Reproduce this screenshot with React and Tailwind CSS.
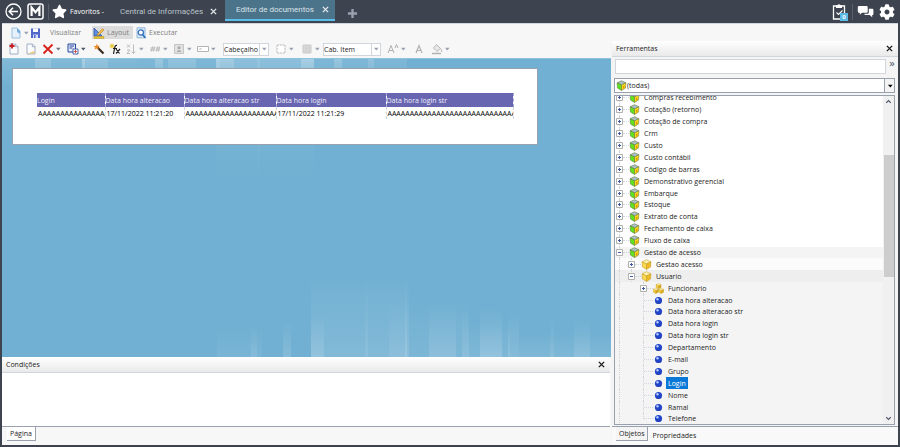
import { useState } from "react";
import { FaStar, FaCog } from "react-icons/fa";

const TREE = [
  { label: "Compras recebimento", level: 0, icon: "cube", box: "+" },
  { label: "Cotação (retorno)", level: 0, icon: "cube", box: "+" },
  { label: "Cotação de compra", level: 0, icon: "cube", box: "+" },
  { label: "Crm", level: 0, icon: "cube", box: "+" },
  { label: "Custo", level: 0, icon: "cube", box: "+" },
  { label: "Custo contábil", level: 0, icon: "cube", box: "+" },
  { label: "Código de barras", level: 0, icon: "cube", box: "+" },
  { label: "Demonstrativo gerencial", level: 0, icon: "cube", box: "+" },
  { label: "Embarque", level: 0, icon: "cube", box: "+" },
  { label: "Estoque", level: 0, icon: "cube", box: "+" },
  { label: "Extrato de conta", level: 0, icon: "cube", box: "+" },
  { label: "Fechamento de caixa", level: 0, icon: "cube", box: "+" },
  { label: "Fluxo de caixa", level: 0, icon: "cube", box: "+" },
  { label: "Gestao de acesso", level: 0, icon: "cube", box: "-", bg: "bg-[#f4f4f4]" },
  { label: "Gestao acesso", level: 1, icon: "yellow", box: "+", bg: "bg-[#fbfbfb]" },
  { label: "Usuario", level: 1, icon: "yellow", box: "-", bg: "bg-[#eeeeee]" },
  { label: "Funcionario", level: 2, icon: "cubes", box: "+", bg: "bg-[#f4f4f4]" },
  { label: "Data hora alteracao", level: 2, icon: "ball", bg: "bg-[#f4f4f4]" },
  { label: "Data hora alteracao str", level: 2, icon: "ball", bg: "bg-[#f4f4f4]" },
  { label: "Data hora login", level: 2, icon: "ball", bg: "bg-[#f4f4f4]" },
  { label: "Data hora login str", level: 2, icon: "ball", bg: "bg-[#f4f4f4]" },
  { label: "Departamento", level: 2, icon: "ball", bg: "bg-[#f4f4f4]" },
  { label: "E-mail", level: 2, icon: "ball", bg: "bg-[#f4f4f4]" },
  { label: "Grupo", level: 2, icon: "ball", bg: "bg-[#f4f4f4]" },
  { label: "Login", level: 2, icon: "ball", bg: "bg-[#f4f4f4]" },
  { label: "Nome", level: 2, icon: "ball", bg: "bg-[#f4f4f4]" },
  { label: "Ramal", level: 2, icon: "ball", bg: "bg-[#f4f4f4]" },
  { label: "Telefone", level: 2, icon: "ball", bg: "bg-[#f4f4f4]" },
];

const COLUMNS = [
  { title: "Login", value: "AAAAAAAAAAAAAAAA", width: "w-[68px]" },
  { title: "Data hora alteracao", value: "17/11/2022 11:21:20", width: "w-[79px]" },
  { title: "Data hora alteracao str", value: "AAAAAAAAAAAAAAAAAAAAA", width: "w-[92px]" },
  { title: "Data hora login", value: "17/11/2022 11:21:29", width: "w-[110px]" },
  { title: "Data hora login str", value: "AAAAAAAAAAAAAAAAAAAAAAAAAAAAA", width: "w-[127px]" },
];

// x, width, height, opacity of the light bars behind the page
const TOP_BARS = [
  [0, 135, 30, 0.12], [33, 16, 40, 0.2], [80, 26, 40, 0.14], [80, 3, 40, 0.2], [135, 270, 26, 0.1],
  [153, 8, 26, 0.22], [166, 28, 26, 0.16], [214, 18, 26, 0.2], [214, 98, 124, 0.1], [214, 4, 100, 0.1],
  [255, 3, 124, 0.1], [299, 13, 26, 0.25], [332, 8, 26, 0.2], [366, 6, 26, 0.15],
];
const BOTTOM_BARS = [
  [215, 45, 30, 0.06], [249, 6, 32, 0.1], [281, 8, 36, 0.14], [309, 96, 85, 0.12], [309, 13, 42, 0.14],
  [363, 3, 82, 0.08], [403, 4, 82, 0.12], [387, 79, 58, 0.08], [427, 27, 54, 0.12], [460, 7, 50, 0.12],
  [466, 42, 34, 0.1], [478, 22, 50, 0.16], [506, 11, 44, 0.14], [517, 92, 24, 0.1], [548, 4, 42, 0.1],
  [572, 16, 40, 0.12],
];

function Svg({ size = "size-3", children, box = "0 0 12 12" }) {
  return (
    <svg viewBox={box} className={`${size} shrink-0`} fill="none" aria-hidden="true">
      {children}
    </svg>
  );
}

function Caret({ color = "text-gray-400" }) {
  return (
    <svg viewBox="0 0 8 4" className={`h-1 w-2 shrink-0 ${color}`} aria-hidden="true">
      <path d="M2 0.8h4.6L4.3 3.4z" fill="currentColor" />
    </svg>
  );
}

function Cross({ size = "size-[7px]" }) {
  return (
    <Svg size={size} box="0 0 8 8">
      <path d="M1 1l6 6M7 1L1 7" stroke="currentColor" strokeWidth="1.6" />
    </Svg>
  );
}

function Tool({ label, split, children, caret }) {
  return (
    <button type="button" aria-label={label} className="flex items-center">
      {children}
      {split && <Caret color={caret} />}
    </button>
  );
}

function ToolSelect({ label, value, width }) {
  return (
    <div className={`relative flex h-[13px] border border-gray-300 bg-white ${width}`}>
      <select aria-label={label} className="w-full appearance-none overflow-hidden bg-transparent pr-[9px] leading-[11px]">
        <option>{value}</option>
      </select>
      <span className="pointer-events-none absolute inset-y-0 right-0 flex items-center border-l border-gray-300 bg-white">
        <Caret />
      </span>
    </div>
  );
}

function PageIcon() {
  return (
    <>
      <path d="M2 1h5.5L10 3.5V11H2z" fill="#fbfcff" stroke="#8d9db8" strokeWidth=".8" />
      <path d="M7.3 1v2.8H10" fill="#dde6f3" stroke="#8d9db8" strokeWidth=".7" />
    </>
  );
}

function NodeIcon({ kind }) {
  if (kind === "ball") {
    return (
      <Svg size="size-[11px]">
        <circle cx="6" cy="6" r="3.9" fill="#2145c9" />
        <path d="M2.8 8a3.9 3.9 0 0 0 6.6-.3A5 5 0 0 1 2.8 8z" fill="#0b1c74" />
        <circle cx="4.9" cy="4.7" r="1.3" fill="#b3cbff" />
      </Svg>
    );
  }
  if (kind === "cubes") {
    return (
      <Svg size="size-[11px]">
        {[[3.4, 0.4], [0.4, 5.6], [6.2, 5.6]].map(([x, y]) => (
          <g key={`${x}-${y}`} transform={`translate(${x} ${y})`} stroke="#c49a18" strokeWidth=".4">
            <path d="M0 1.4L2.7 0l2.7 1.4-2.7 1.4z" fill="#fff0a0" />
            <path d="M0 1.4l2.7 1.4v3L0 4.4z" fill="#f5cf3c" />
            <path d="M5.4 1.4L2.7 2.8v3l2.7-1.4z" fill="#d9a71d" />
          </g>
        ))}
      </Svg>
    );
  }
  const cube = kind === "cube";
  return (
    <Svg size="size-[11px]">
      <g stroke={cube ? "#5f7440" : "#c49a24"} strokeWidth=".6" strokeLinejoin="round">
        <path d="M1.2 3L6 .8 10.800 3 6 5.400z" fill={cube ? "#a9bfc3" : "#fff2ac"} />
        <path d="M1.200 3L6 5.400v6L1.600 8.800z" fill={cube ? "#5fe31c" : "#fbd94e"} />
        <path d="M10.800 3L6 5.400v6l4.400-2.600z" fill={cube ? "#ffdc18" : "#eebb27"} />
      </g>
      {cube && <path d="M7.600 6.700l1.600-.9v2.800l-1.600.9z" fill="#d99b00" />}
    </Svg>
  );
}

function Expander({ sign }) {
  return (
    <Svg size="size-[7px]" box="0 0 7 7">
      <path d="M.5.5h6v6h-6z" fill="#fff" stroke="#b0b0b0" />
      <path d={sign === "+" ? "M2 3.5h3M3.5 2v3" : "M2 3.5h3"} stroke="#3d58a8" />
    </Svg>
  );
}

function TreeRow({ node, last, selected, onSelect }) {
  return (
    <li className={`flex min-h-0 flex-1 items-center ${node.bg || ""}`}>
      {node.level > 0 && <span className="ml-1 h-full w-3 shrink-0 border-l border-dotted border-gray-300" />}
      {node.level > 1 && <span className="w-3 shrink-0" />}
      <span className={`relative flex h-full w-[13px] shrink-0 items-center ${node.level > 0 ? "-ml-[3px]" : "ml-px"}`}>
        <span className={`absolute top-0 left-[3px] border-l border-dotted border-gray-300 ${last ? "h-1/2" : "h-full"}`} />
        {node.box ? (
          <span className="relative">
            <Expander sign={node.box} />
          </span>
        ) : (
          <span className="w-1" />
        )}
        <span className="h-px flex-1 border-t border-dotted border-gray-300" />
      </span>
      <NodeIcon kind={node.icon} />
      <button
        type="button"
        onClick={onSelect}
        className={`ml-[2px] h-full px-[2px] leading-[11px] ${selected ? "bg-[#0a78d7] text-white" : ""}`}
      >
        {node.label}
      </button>
    </li>
  );
}

function PanelHeader({ title }) {
  return (
    <div className="flex h-4 shrink-0 items-center justify-between border-b border-gray-300 bg-linear-to-b from-white to-[#e9e9e9] pr-[5px] pl-1">
      <h2>{title}</h2>
      <button type="button" aria-label={`Fechar ${title}`}>
        <Cross />
      </button>
    </div>
  );
}

function Header() {
  return (
    <header className="flex h-[23px] shrink-0 items-center px-[5px] text-white">
      <button type="button" aria-label="Voltar">
        <Svg size="size-[17px]" box="0 0 17 17">
          <circle cx="8.5" cy="8.5" r="7.5" stroke="currentColor" strokeWidth="1.3" />
          <path d="M13 8.5H4.5M8 4.8L4.3 8.5 8 12.2" stroke="currentColor" strokeWidth="1.6" />
        </Svg>
      </button>
      <button type="button" aria-label="Início" className="ml-[5px]">
        <Svg size="size-[17px]" box="0 0 17 17">
          <rect x="1" y="1" width="15" height="15" rx="2" stroke="currentColor" strokeWidth="1.5" />
          <path d="M4.6 13V4.6l3.9 4.6 3.9-4.6V13" stroke="currentColor" strokeWidth="2.2" />
        </Svg>
      </button>
      <span className="ml-1 h-4 w-px bg-[#59606b]" />
      <button type="button" className="ml-[3px] flex items-center gap-[3px]">
        <FaStar className="size-[15px]" />
        Favoritos -
      </button>
      <nav className="ml-4 flex items-center self-stretch font-[Roboto,sans-serif] text-[8px]">
        <a href="#central" className="w-[90px] text-[#bcc2ca]">Central de Informações</a>
        <button type="button" aria-label="Fechar Central de Informações" className="text-gray-200">
          <Cross />
        </button>
        <span className="ml-2 flex h-[21px] items-center self-start border-b-2 border-[#5bbde9] bg-[#4b7389] pl-[11px]">
          <a href="#editor" className="w-[86px] text-[#dbe5ea]">Editor de documentos</a>
          <button type="button" aria-label="Fechar Editor de documentos" className="mr-[6px] text-gray-200">
            <Cross />
          </button>
        </span>
        <button type="button" aria-label="Nova aba" className="ml-3 pt-1 text-gray-400">
          <Svg size="size-[11px]">
            <path d="M6 1v10M1 6h10" stroke="currentColor" strokeWidth="2.6" />
          </Svg>
        </button>
      </nav>
      <div className="ml-auto flex items-center">
        <button type="button" aria-label="Tarefas" className="relative mr-1">
          <Svg size="size-[17px]" box="0 0 17 17">
            <path d="M2.5 3h11v13h-11z" stroke="currentColor" strokeWidth="1.3" />
            <path d="M5 5V2.200h1.600a1.500 1.500 0 0 1 2.800 0H11V5z" fill="currentColor" />
            <path d="M5.500 9.500l2 2 4-4" stroke="currentColor" strokeWidth="1.1" />
          </Svg>
          <span className="absolute right-0 -bottom-px flex size-2 items-center justify-center bg-[#5bb9e6] text-[6px] leading-none font-bold">0</span>
        </button>
        <span className="mr-1 h-4 w-px bg-[#59606b]" />
        <button type="button" aria-label="Mensagens" className="mr-[5px]">
          <Svg size="size-[17px]" box="0 0 17 17">
            <path d="M2 3h7.5q1.200 0 1.200 1.200v4.300q0 1.200-1.200 1.200H5l-2.200 2V9.700H2Q.8 9.700.8 8.500V4.200Q.8 3 2 3z" fill="currentColor" />
            <path d="M11.800 5.700h3.400q1.200 0 1.200 1.200v4q0 1.200-1.200 1.200v2.200l-2.500-2.200H8.500q-1.200 0-1.200-1.300h3.200q1.300 0 1.300-1.300z" fill="currentColor" />
          </Svg>
        </button>
        <button type="button" aria-label="Configurações">
          <FaCog className="size-4" />
        </button>
      </div>
    </header>
  );
}

function MainToolbar() {
  return (
    <div role="toolbar" aria-label="Principal" className="flex h-[18px] shrink-0 items-center border-t border-gray-300 pl-2 text-[#808080]">
      <Tool label="Novo" split>
        <Svg>
          <path d="M2 1h5l3 3v7H2z" fill="#e6f1fb" stroke="#86b2d8" strokeWidth=".8" />
          <path d="M7 1l3 3v3L7 5z" fill="#73aee0" />
        </Svg>
      </Tool>
      <button type="button" aria-label="Salvar">
        <Svg>
          <path d="M1 1.500h9V11H1z" fill="#5067c9" />
          <path d="M3 1.500h5V5H3z" fill="#fff" />
          <path d="M3 7.500h5V11H3z" fill="#d5dcfa" />
          <path d="M4 8h1.500v3H4z" fill="#5067c9" />
        </Svg>
      </button>
      <div className="ml-2 flex items-center">
        <button type="button" className="w-[42px] text-left">Visualizar</button>
        <button type="button" aria-pressed="true" className="flex h-[13px] w-[41px] items-center gap-[2px] bg-[#dcdcdc] px-px">
          <Svg>
            <path d="M1 1v8h8z" fill="#5c8de0" stroke="#2c55a8" strokeWidth=".8" />
            <path d="M4.500 7l5-5.500L11 3 6 8l-2 .5z" fill="#ffc04a" stroke="#a56c12" strokeWidth=".5" />
            <path d="M1 9.500h10v2H1z" fill="#e7c52e" stroke="#a88616" strokeWidth=".4" />
          </Svg>
          Layout
        </button>
        <button type="button" className="ml-[2px] flex items-center gap-[2px]">
          <Svg>
            <path d="M2 .8h8v10H2z" fill="#dcebfa" stroke="#7aa6d3" strokeWidth=".8" />
            <circle cx="5.8" cy="5.5" r="2.6" fill="#fff" stroke="#2d6eb9" strokeWidth="1.2" />
            <path d="M7.500 7.500L10.500 11" stroke="#2d6eb9" strokeWidth="1.5" />
          </Svg>
          Executar
        </button>
      </div>
    </div>
  );
}

function FormatToolbar() {
  return (
    <div role="toolbar" aria-label="Formatação" className="flex h-[17px] shrink-0 items-center gap-[6px] pb-px pl-[6px]">
      <div className="flex items-center gap-[5px]">
        <Tool label="Inserir página">
          <Svg><PageIcon /><path d="M4 .5v5M1.500 3h5" stroke="#c81e1e" strokeWidth="1.8" /></Svg>
        </Tool>
        <Tool label="Página">
          <Svg><PageIcon /><path d="M2.500 10.500h7V8z" fill="#eac77b" /></Svg>
        </Tool>
        <Tool label="Excluir" split caret="text-gray-500">
          <Svg><path d="M1.500 2l9 8.500M10.500 1.500l-9 9" stroke="#d8201b" strokeWidth="1.8" /></Svg>
        </Tool>
        <Tool label="Inserir objeto" split caret="text-gray-600">
          <Svg>
            <path d="M1 1h7.500v8H1z" fill="#e7edfb" stroke="#23479b" />
            <path d="M2.500 3h4.500M2.500 5h3" stroke="#23479b" />
            <path d="M6 6h5v5H6z" fill="#fff" stroke="#23479b" strokeWidth=".8" />
            <path d="M8.500 6.800v3.400M6.800 8.500h3.400" stroke="#c33" strokeWidth=".8" />
          </Svg>
        </Tool>
      </div>
      <div className="flex items-center gap-1">
        <Tool label="Assistente">
          <Svg>
            <path d="M4.500 4.500l6 6" stroke="#3b2a20" strokeWidth="2.2" />
            <path d="M3.800 .5l.8 2.300 2.400.2-1.900 1.400.7 2.400-2-1.400-2.300 1.200.8-2.200L.5 2.900h2.400z" fill="#f08a24" />
          </Svg>
        </Tool>
        <Tool label="Função">
          <Svg>
            <path d="M3 .5v5M.5 3h5M1.200 1.200l3.600 3.600M4.800 1.200L1.200 4.800" stroke="#e5c21d" strokeWidth=".9" />
            <path d="M8 2.500q-1.800-.5-2.200 1.800L4.500 11M4 5.500h4M7 6l3.500 4.500M11 6l-4 4.500" stroke="#222" strokeWidth="1.2" />
          </Svg>
        </Tool>
        <Tool label="Ordenar" split>
          <Svg><path d="M2 1.500l3 3M5 1.500l-3 3M2 7h3L2 10.500h3M8.500 1.500v9M6.800 8.500l1.700 2 1.700-2" stroke="#b4b4b4" strokeWidth=".9" /></Svg>
        </Tool>
        <Tool label="Formato numérico" split>
          <Svg><path d="M3.500 3.500l-1 5M5.500 3.500l-1 5M1.500 5h4.500M1 7h4.500M8.500 3.500l-1 5M10.500 3.500l-1 5M6.800 5H11M6.500 7h4" stroke="#b4b4b4" strokeWidth=".9" /></Svg>
        </Tool>
        <Tool label="Imagem" split>
          <Svg><path d="M1.500 1.500h9v9h-9z" fill="#e2e2e2" stroke="#c4c4c4" /><circle cx="6" cy="4.8" r="1.5" fill="#aaa" /><path d="M3.500 9q2.500-4 5 0z" fill="#aaa" /></Svg>
        </Tool>
        <Tool label="Rótulo" split>
          <Svg><path d="M.5 3.500h11v5H.5z" fill="#fff" stroke="#b4b4b4" /><path d="M2.500 7l1-2 1 2" stroke="#b4b4b4" strokeWidth=".7" /></Svg>
        </Tool>
      </div>
      <ToolSelect label="Seção" value="Cabeçalho" width="w-[46px]" />
      <Tool label="Bordas" split>
        <Svg><path d="M2 2h8v8H2z" fill="#fff" stroke="#b8b8b8" strokeDasharray="2 .7" /></Svg>
      </Tool>
      <Tool label="Preenchimento" split>
        <Svg><path d="M2 2h8v8H2z" fill="#dcdcdc" stroke="#cacaca" /><path d="M2 5h8M5 2v8M2 8h8M8 2v8" stroke="#cacaca" strokeWidth=".6" /></Svg>
      </Tool>
      <div className="-ml-1 flex items-center gap-[6px]">
        <ToolSelect label="Estilo" value="Cab. Item" width="w-[58px]" />
        <Tool label="Tamanho da fonte" split>
          <Svg><path d="M1 10l3-7.500L7 10M2 7.500h4M8 5l1.500-3.500L11 5" stroke="#b0b0b0" /></Svg>
        </Tool>
        <Tool label="Cor da fonte">
          <Svg><path d="M3 10l3-7.500L9 10M4 7.500h4" stroke="#b0b0b0" strokeWidth="1.2" /></Svg>
        </Tool>
        <Tool label="Cor de fundo" split>
          <Svg><path d="M5.500 1.500l4 4-3.500 3-3.500-3.500zM9.500 5.500q2 1.500 1 3.500" fill="#e8e8e8" stroke="#b0b0b0" strokeWidth=".9" /><path d="M1 10.500h9" stroke="#b0b0b0" strokeWidth="1.4" /></Svg>
        </Tool>
      </div>
    </div>
  );
}

function Canvas() {
  return (
    <div className="relative min-h-0 flex-1 overflow-hidden border-t border-[#8cc3de] bg-[#71b0d2]">
      <svg viewBox="0 0 609 299" preserveAspectRatio="none" className="absolute inset-0 size-full" aria-hidden="true">
        <defs>
          <linearGradient id="down" x1="0" y1="0" x2="0" y2="1">
            <stop offset="0" stopColor="#fff" />
            <stop offset="1" stopColor="#fff" stopOpacity="0" />
          </linearGradient>
          <linearGradient id="up" x1="0" y1="1" x2="0" y2="0">
            <stop offset="0" stopColor="#fff" />
            <stop offset="1" stopColor="#fff" stopOpacity="0" />
          </linearGradient>
        </defs>
        {TOP_BARS.map(([x, w, h, o]) => (
          <rect key={`${x}-${w}`} x={x} y="0" width={w} height={h} fill="url(#down)" opacity={o} />
        ))}
        {BOTTOM_BARS.map(([x, w, h, o]) => (
          <rect key={`${x}-${w}`} x={x} y={299 - h} width={w} height={h} fill="url(#up)" opacity={o} />
        ))}
      </svg>
      <div className="relative mt-[9px] ml-[10px] w-[526px] border border-gray-400 bg-white pt-6 pb-[25px] pl-6">
        <table className="w-[476px] table-fixed border-collapse text-left">
          <thead>
            <tr className="h-[14px] bg-[#6865b1] text-[#f0f0fa]">
              {COLUMNS.map((col) => (
                <th
                  key={col.title}
                  className={`overflow-hidden border-r border-dashed border-r-[#a9a7d4] p-0 font-normal whitespace-nowrap ${col.width}`}
                >
                  {col.title}
                </th>
              ))}
            </tr>
          </thead>
          <tbody>
            <tr className="h-3 text-black">
              {COLUMNS.map((col) => (
                <td key={col.title} className="overflow-hidden border-r border-dashed border-gray-300 p-0 pl-px whitespace-nowrap">
                  {col.value}
                </td>
              ))}
            </tr>
          </tbody>
        </table>
      </div>
    </div>
  );
}

function ToolsPanel() {
  const [selected, setSelected] = useState("Login");

  return (
    <aside className="flex w-[287px] shrink-0 flex-col bg-[#f4f4f4] pl-px">
      <PanelHeader title="Ferramentas" />
      <div className="flex pt-[2px] pl-[3px]">
        <input aria-label="Pesquisar" className="h-[15px] min-w-0 flex-1 border border-gray-300 bg-white px-1 outline-none" />
        <button type="button" aria-label="Mais" className="w-3 self-start text-[11px] leading-[8px] text-gray-600">»</button>
      </div>
      <div className="relative mt-1 mr-[3px] ml-[2px] flex h-[15px] items-center border border-gray-400 bg-white pl-px">
        <NodeIcon kind="cube" />
        <select aria-label="Filtro" className="w-full appearance-none bg-transparent">
          <option>(todas)</option>
        </select>
        <span className="pointer-events-none absolute inset-y-0 right-0 flex w-[10px] items-center justify-center border-l border-gray-400 bg-[#f4f4f4]">
          <Caret color="text-black" />
        </span>
      </div>
      <div className="mt-[2px] mr-[3px] ml-[2px] flex min-h-0 flex-1 overflow-hidden border border-gray-400 bg-white">
        <ul className="-mt-1 -mb-px flex flex-1 flex-col">
          {TREE.map((node, i) => (
            <TreeRow
              key={node.label}
              node={node}
              last={i === TREE.length - 1}
              selected={selected === node.label}
              onSelect={() => setSelected(node.label)}
            />
          ))}
        </ul>
        <div className="flex w-[11px] flex-col items-center bg-[#f0f0f0] text-gray-600">
          <Svg size="size-[11px]"><path d="M3.500 7.500L6 5l2.500 2.500" stroke="currentColor" strokeWidth="1.3" /></Svg>
          <span className="mt-12 h-[122px] w-[10px] bg-[#cdcdcd]" />
          <span className="mt-auto">
            <Svg size="size-[11px]"><path d="M3.500 4.500L6 7l2.500-2.500" stroke="currentColor" strokeWidth="1.3" /></Svg>
          </span>
        </div>
      </div>
      <div className="mt-px flex h-[19px] shrink-0 border-t border-gray-400 bg-[#f9f9f9] pl-1">
        <button type="button" className="h-[14px] border-r border-b border-gray-400 bg-[#f4f4f4] px-[3px]">Objetos</button>
        <button type="button" className="h-4 px-1">Propriedades</button>
      </div>
    </aside>
  );
}

export default function App() {
  return (
    <div className="flex h-screen flex-col bg-[#3d444f] font-['Open_Sans','Noto_Sans',sans-serif] text-[7px] leading-[11px] text-[#1c1c1c]">
      <Header />
      <main className="mx-[2px] mb-[2px] flex min-h-0 flex-1 flex-col bg-[#f7f7f7]">
        <MainToolbar />
        <div className="flex min-h-0 flex-1">
          <div className="flex min-w-0 flex-1 flex-col">
            <FormatToolbar />
            <Canvas />
            <section className="mr-px flex h-[70px] shrink-0 flex-col border-b border-gray-400 bg-white">
              <PanelHeader title="Condições" />
            </section>
            <div className="flex h-[18px] shrink-0 pl-[5px]">
              <button type="button" className="h-[14px] border-r border-b border-gray-400 bg-white px-[3px]">Página</button>
            </div>
          </div>
          <ToolsPanel />
        </div>
      </main>
    </div>
  );
}
